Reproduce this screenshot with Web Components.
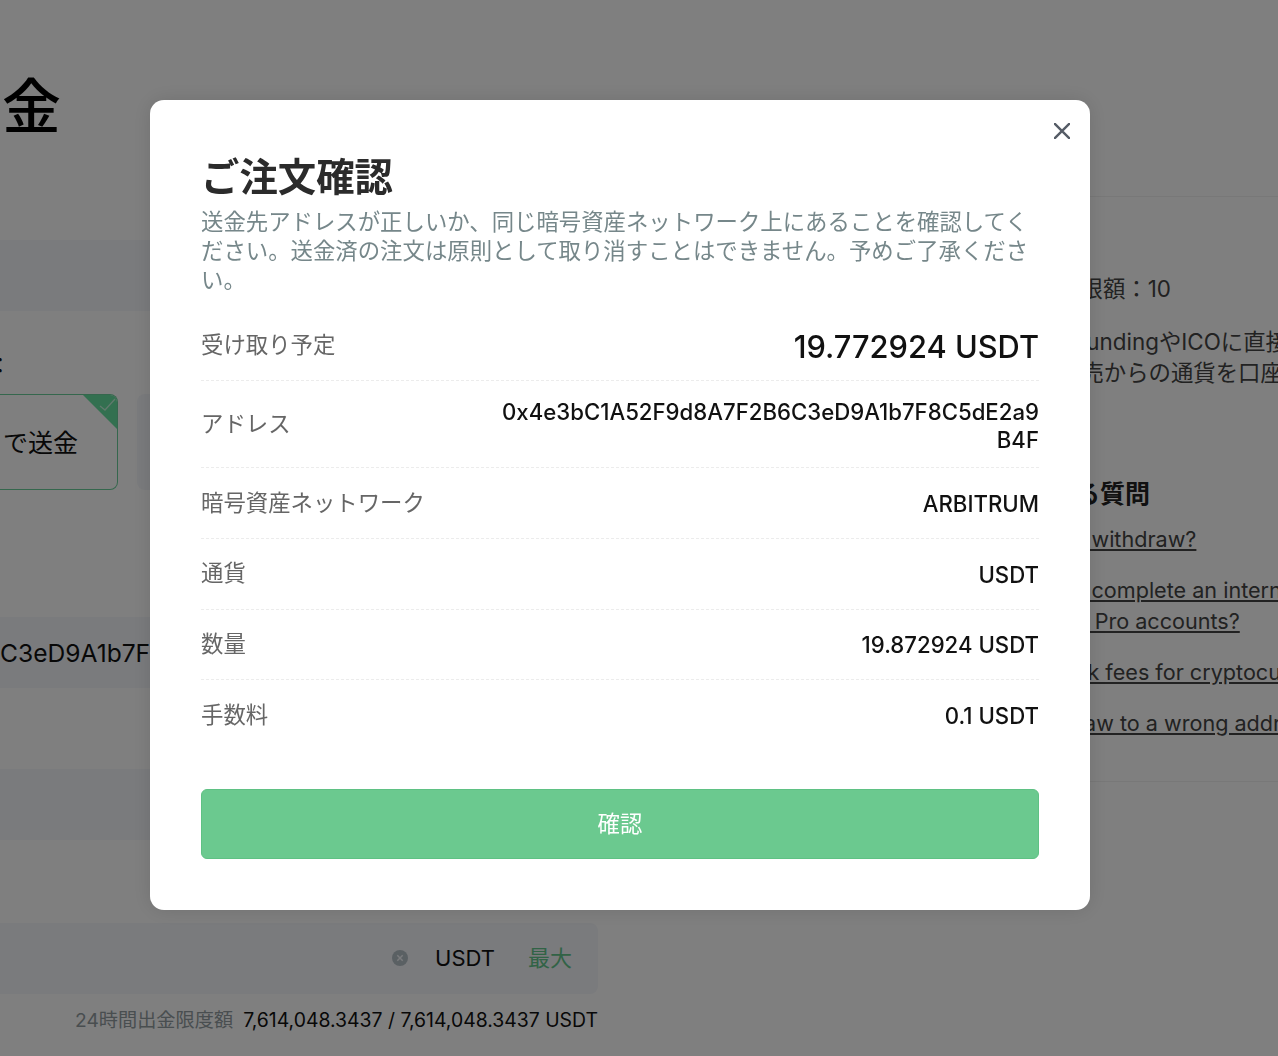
<!DOCTYPE html>
<html lang="ja">
<head>
<meta charset="utf-8">
<title>出金</title>
<style>
  html, body { margin: 0; height: 100%; overflow: hidden; background: #fff; }
  body { font-family: Inter, "Noto Sans CJK JP", sans-serif; }
</style>
</head>
<body>
<withdraw-page>
  <h-title slot="left">金</h-title>
  <gray-field slot="left" style="margin-top:98px"></gray-field>
  <field-label slot="left" style="margin-top:39px">：</field-label>
  <method-tabs slot="left">で送金</method-tabs>
  <gray-field slot="left" style="margin-top:127px"><span style="font-size:24.600px;color:#111">C3eD9A1b7F8C5dE2a9B4F</span></gray-field>
  <gray-field slot="left" style="margin-top:81px"></gray-field>
  <gray-field slot="left" style="margin-top:83px;width:598px;justify-content:flex-end"><amount-tail></amount-tail></gray-field>
  <limit-line slot="left"></limit-line>
  <side-panel slot="right"></side-panel>
</withdraw-page>

<modal-overlay>
  <span slot="title">ご注文確認</span>
  <span slot="desc">送金先アドレスが正しいか、同じ暗号資産ネットワーク上にあることを確認してください。送金済の注文は原則として取り消すことはできません。予めご了承ください。</span>
  <order-row label="受け取り予定" big>19.772924 USDT</order-row>
  <order-row label="アドレス" addr>0x4e3bC1A52F9d8A7F2B6C3eD9A1b7F8C5dE2a9B4F</order-row>
  <order-row label="暗号資産ネットワーク">ARBITRUM</order-row>
  <order-row label="通貨">USDT</order-row>
  <order-row label="数量">19.872924 USDT</order-row>
  <order-row label="手数料" last>0.1 USDT</order-row>
</modal-overlay>

<script>
function define(name, html, proto) {
  const template = document.createElement("template");
  template.innerHTML = html;
  customElements.define(name, class extends HTMLElement {
    constructor() {
      super();
      this.attachShadow({ mode: "open" });
      this.shadowRoot.appendChild(template.content.cloneNode(true));
    }
    connectedCallback() {
      if (proto) proto.call(this);
    }
  });
}

define("withdraw-page", `
  <style>
    :host { display: grid; grid-template-columns: 598px 680px; width: 1278px; color: #111; }
    .left { display: flex; flex-direction: column; align-items: flex-start; min-width: 0; }
    .right { min-width: 0; }
  </style>
  <div class="left"><slot name="left"></slot></div>
  <div class="right"><slot name="right"></slot></div>
`);

define("h-title", `
  <style>
    :host { display: block; padding: 72px 0 0 2px; font-size: 59px; line-height: 70px; height: 70px; font-weight: 500; color: #000; }
  </style>
  <slot></slot>
`);

define("gray-field", `
  <style>
    :host { display: flex; align-items: center; box-sizing: border-box; height: 71px; width: 598px; background: #f4f6fa; border-radius: 0 8px 8px 0; overflow: hidden; white-space: nowrap; }
  </style>
  <slot></slot>
`);

define("field-label", `
  <style>
    :host { display: block; height: 30px; font-size: 22px; line-height: 30px; margin-left: -11px; color: #111; }
  </style>
  <slot></slot>
`);

define("method-tabs", `
  <style>
    :host { display: flex; gap: 19px; margin-top: 14px; width: 598px; }
    .card { box-sizing: border-box; height: 96px; border-radius: 0 8px 8px 0; }
    .on { position: relative; display: flex; align-items: center; width: 118px; padding: 0 0 2px 3px; border: 1px solid #6bcf9a; border-left: 0; font-size: 25px; color: #111; overflow: hidden; }
    .off { flex: 1; background: #f4f6fa; border-radius: 8px; }
    svg { position: absolute; top: -1px; right: -1px; }
  </style>
  <div class="card on"><slot></slot>
    <svg width="36" height="36" viewBox="0 0 36 36">
      <path d="M0 0H36V36Z" fill="#66e0a0"/>
      <path d="M18 12l5 4L33 5" fill="none" stroke="#fff" stroke-opacity=".6" stroke-width="1.300"/>
    </svg>
  </div>
  <div class="card off"></div>
`);

define("amount-tail", `
  <style>
    :host { display: flex; align-items: center; padding: 0 26px 2px 0; font-size: 22px; color: #111; }
    svg { margin-right: 27px; }
    .max { margin-left: 33px; color: #63c68c; position: relative; top: -2px; }
  </style>
  <svg width="16" height="16" viewBox="0 0 16 16">
    <circle cx="8" cy="8" r="8" fill="#b4c0c7"/>
    <path d="M5.300 5.300l5.400 5.400M10.700 5.300l-5.400 5.400" stroke="#f4f6fa" stroke-width="1.500"/>
  </svg>
  <span>USDT</span><span class="max">最大</span>
`);

define("limit-line", `
  <style>
    :host { display: flex; justify-content: flex-end; width: 598px; margin-top: 12px; font-size: 19.400px; line-height: 28px; color: #111; white-space: nowrap; }
    .name { color: #929ca1; margin-right: 10px; font-size: 19.200px; }
  </style>
  <span class="name">24時間出金限度額</span><span>7,614,048.3437 / 7,614,048.3437 USDT</span>
`);

define("side-panel", `
  <style>
    :host { display: block; box-sizing: border-box; margin-top: 196px; height: 586px; padding-left: 380px; overflow: hidden; border-top: 1px solid #f0f0f0; border-bottom: 1px solid #f0f0f0; font-size: 22.400px; color: #444; white-space: nowrap; }
    p { margin: 0; }
    .min { margin-top: 76px; line-height: 32px; }
    .note { margin-top: 21px; line-height: 31px; }
    h3 { margin: 88px 0 0; font-size: 25px; line-height: 36px; font-weight: 700; color: #222; }
    a { display: block; color: #444; font-size: 21.600px; text-decoration: underline; line-height: 31px; margin-top: 20px; }
    h3 + a { margin-top: 12px; }
  </style>
  <p class="min" style="padding-left:13px">最低出金限額：10</p>
  <p class="note" style="padding-left:31px">CrowdfundingやICOに直接<br><span style="padding-left:50px">販売からの通貨を口座</span></p>
  <h3 style="padding-left:22px">よくある質問</h3>
  <a style="padding-left:17px">How do I withdraw?</a>
  <a style="padding-left:17px">How do I complete an internal<br><span style="padding-left:14px">transfer Pro accounts?</span></a>
  <a style="padding-left:38px">network fees for cryptocurrency</a>
  <a style="padding-left:42px">withdraw to a wrong address</a>
`);

define("modal-overlay", `
  <style>
    :host { position: fixed; inset: 0; display: block; background: rgba(0, 0, 0, .5); }
    .dialog { position: relative; box-sizing: border-box; width: 940px; height: 810px; margin: 100px 0 0 150px; padding: 51px; background: #fff; border-radius: 14px; box-shadow: 0 0 20px rgba(0, 0, 0, .12); }
    h2 { margin: 0 0 4px; font-size: 38.400px; line-height: 52px; font-weight: 700; color: #2b2b2b; }
    .desc { font-size: 22.400px; line-height: 29px; color: #76878a; margin-bottom: 16px; }
    .close { position: absolute; top: 23px; right: 20px; width: 16px; height: 16px; }
    .ok { display: flex; align-items: center; justify-content: center; box-sizing: border-box; height: 70px; margin-top: 38px; padding-bottom: 3px; background: #6bc98f; border: 1px solid #5fc184; border-radius: 6px; color: #fff; font-size: 22.400px; }
  </style>
  <div class="dialog">
    <svg class="close" viewBox="0 0 16 16"><path d="M1 1l15 15M16 1L1 16" transform="translate(-.5 -.5)" stroke="#555c66" stroke-width="2.400" stroke-linecap="round"/></svg>
    <h2><slot name="title"></slot></h2>
    <div class="desc"><slot name="desc"></slot></div>
    <slot></slot>
    <div class="ok">確認</div>
  </div>
`);

define("order-row", `
  <style>
    :host { display: flex; align-items: center; justify-content: space-between; box-sizing: border-box; min-height: 70.670px; padding: 15px 0; border-bottom: 1px dashed #ececec; }
    :host([big]) { min-height: 71.330px; }
    :host([last]) { border-bottom-color: transparent; }
    .label { position: relative; top: -1px; flex: none; font-size: 22.400px; line-height: 29px; color: #666; white-space: nowrap; }
    .value { position: relative; top: 1px; width: 540px; text-align: right; font-size: 22.200px; font-weight: 500; line-height: 28px; color: #111; overflow-wrap: anywhere; }
    :host([addr]) .value { top: 2px; }
    :host([big]) .value { font-size: 30.800px; line-height: 40px; top: 2px; }
  </style>
  <span class="label"></span><span class="value"><slot></slot></span>
`, function () {
  this.shadowRoot.querySelector(".label").textContent = this.getAttribute("label");
});
</script>
</body>
</html>
